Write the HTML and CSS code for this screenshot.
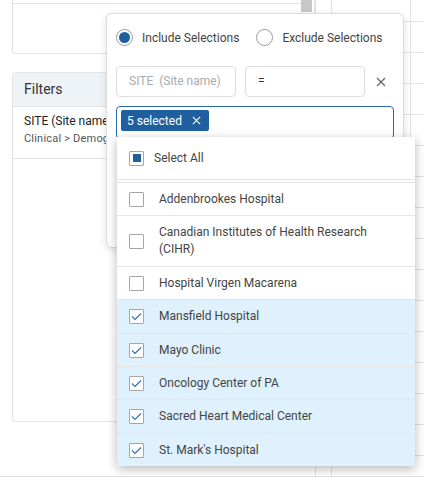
FILE: index.html
```html
<!DOCTYPE html>
<html lang="en">
<head>
  <meta charset="UTF-8" />
  <title>Filters</title>
  <link rel="stylesheet" href="styles.css">
</head>
<body>
  <div class="page">
    <div class="left">
      <div class="card-top">
        <div class="card-top-bar">
          <div class="card-top-line"></div>
          <div class="thumb"></div>
        </div>
      </div>
      <div class="filters">
        <div class="filters-head">Filters</div>
        <div class="filter-row">
          <div class="filter-name">SITE (Site name)</div>
          <div class="filter-path">Clinical &gt; Demographics</div>
        </div>
      </div>
    </div>
    <div class="strip"></div>
    <div class="table">
      <div class="trow first"><div></div><div class="tcell"></div></div>
      <div class="trow"><div></div><div class="tcell"></div></div>
      <div class="trow"><div></div><div class="tcell"></div></div>
      <div class="trow"><div></div><div class="tcell"></div></div>
      <div class="trow"><div></div><div class="tcell"></div></div>
      <div class="trow"><div></div><div class="tcell"></div></div>
      <div class="trow"><div></div><div class="tcell"></div></div>
      <div class="trow"><div></div><div class="tcell"></div></div>
      <div class="trow"><div></div><div class="tcell"></div></div>
      <div class="trow"><div></div><div class="tcell"></div></div>
      <div class="trow"><div></div><div class="tcell"></div></div>
      <div class="trow"><div></div><div class="tcell"></div></div>
      <div class="trow"><div></div><div class="tcell"></div></div>
      <div class="trow"><div></div><div class="tcell"></div></div>
      <div class="trow"><div></div><div class="tcell"></div></div>
    </div>
  </div>

  <div class="popup">
    <div class="radios">
      <label class="radio"><span class="radio-dot on"></span>Include Selections</label>
      <label class="radio"><span class="radio-dot"></span>Exclude Selections</label>
    </div>
    <div class="fields">
      <div class="field muted">SITE&nbsp; (Site name)</div>
      <div class="field">=</div>
      <span class="close">
        <svg width="10" height="10" viewBox="0 0 10 10"><path d="M1 1L9 9M9 1L1 9" stroke="#666" stroke-width="1.2" fill="none"/></svg>
      </span>
    </div>
    <div class="multi">
      <span class="chip">5 selected
        <svg width="9" height="9" viewBox="0 0 10 10"><path d="M1 1L9 9M9 1L1 9" stroke="#fff" stroke-width="1.3" fill="none"/></svg>
      </span>
    </div>
  </div>

  <div class="dropdown">
    <div class="select-all"><span class="box partial"></span>Select All</div>
    <div class="options">
      <div class="option"><span class="box"></span><span>Addenbrookes Hospital</span></div>
      <div class="option"><span class="box"></span><span>Canadian Institutes of Health Research (CIHR)</span></div>
      <div class="option"><span class="box"></span><span>Hospital Virgen Macarena</span></div>
      <div class="option sel"><span class="box checked"><svg width="11" height="9" viewBox="0 0 11 9"><path d="M1 4.5L4 7.5L10 1.5" stroke="#2b6fb3" stroke-width="1.1" fill="none"/></svg></span><span>Mansfield Hospital</span></div>
      <div class="option sel"><span class="box checked"><svg width="11" height="9" viewBox="0 0 11 9"><path d="M1 4.5L4 7.5L10 1.5" stroke="#2b6fb3" stroke-width="1.1" fill="none"/></svg></span><span>Mayo Clinic</span></div>
      <div class="option sel"><span class="box checked"><svg width="11" height="9" viewBox="0 0 11 9"><path d="M1 4.5L4 7.5L10 1.5" stroke="#2b6fb3" stroke-width="1.1" fill="none"/></svg></span><span>Oncology Center of PA</span></div>
      <div class="option sel"><span class="box checked"><svg width="11" height="9" viewBox="0 0 11 9"><path d="M1 4.5L4 7.5L10 1.5" stroke="#2b6fb3" stroke-width="1.1" fill="none"/></svg></span><span>Sacred Heart Medical Center</span></div>
      <div class="option sel last"><span class="box checked"><svg width="11" height="9" viewBox="0 0 11 9"><path d="M1 4.5L4 7.5L10 1.5" stroke="#2b6fb3" stroke-width="1.1" fill="none"/></svg></span><span>St. Mark's Hospital</span></div>
    </div>
  </div>
</body>
</html>
```

FILE: styles.css
```css
body {
  margin: 0;
  background: #fff;
  font-family: Roboto, "Liberation Sans", sans-serif;
  color: #444;
  font-size: 12px;
}
.page {
  display: flex;
  height: 476px;
  border-bottom: 1px solid #e2e2e2;
  overflow: hidden;
}
.left {
  flex: 0 0 303px;
  padding-left: 12px;
}
.card-top {
  height: 53px;
  border: 1px solid #e3e3e3;
  border-top: none;
  border-radius: 0 0 4px 4px;
}
.card-top-bar {
  display: flex;
  align-items: flex-start;
}
.card-top-line {
  width: 288px;
  height: 3px;
  border-bottom: 1px solid #e3e3e3;
}
.thumb {
  width: 11px;
  height: 12px;
  background: #c8c8c8;
}
.filters {
  margin-top: 18px;
  height: 348px;
  border: 1px solid #e3e3e3;
  border-radius: 4px;
}
.filters-head {
  height: 33px;
  line-height: 33px;
  padding-left: 11px;
  background: #eef3f7;
  border-bottom: 1px solid #e3e3e3;
  font-size: 14px;
  color: #333;
  border-radius: 4px 4px 0 0;
}
.filter-row {
  padding: 5px 11px 0;
  height: 46px;
  border-bottom: 1px solid #e3e3e3;
}
.filter-name {
  color: #222;
  font-size: 12px;
  line-height: 18px;
  white-space: nowrap;
}
.filter-path {
  color: #555;
  font-size: 11px;
  line-height: 18px;
  white-space: nowrap;
  letter-spacing: 0.2px;
}
.strip {
  flex: 0 0 15px;
  border-left: 1px solid #e3e3e3;
  border-right: 1px solid #e3e3e3;
}
.table {
  flex: 1;
}
.trow {
  display: grid;
  grid-template-columns: 78px 1fr;
  height: 30px;
  border-bottom: 1px solid #e3e3e3;
}
.trow.first {
  height: 21px;
}
.tcell {
  border-left: 1px solid #e3e3e3;
}

.popup {
  position: absolute;
  left: 106px;
  top: 13px;
  width: 278px;
  height: 233px;
  padding: 0 9px;
  background: #fff;
  border: 1px solid #ddd;
  border-radius: 6px;
  box-shadow: 0 2px 8px rgba(0, 0, 0, 0.12);
}
.radios {
  display: flex;
  gap: 17px;
  padding-top: 15px;
  height: 17px;
  align-items: center;
  white-space: nowrap;
}
.radio {
  display: flex;
  align-items: center;
  gap: 9px;
  color: #444;
}
.radio-dot {
  width: 15px;
  height: 15px;
  border: 1px solid #999;
  border-radius: 50%;
  display: flex;
  align-items: center;
  justify-content: center;
}
.radio-dot.on::after {
  content: "";
  width: 11px;
  height: 11px;
  border-radius: 50%;
  background: #1f5f9f;
}
.fields {
  display: flex;
  align-items: center;
  gap: 9px;
  margin-top: 20px;
}
.field {
  width: 106px;
  height: 29px;
  line-height: 29px;
  padding-left: 12px;
  border: 1px solid #ddd;
  border-radius: 4px;
  color: #333;
}
.field.muted {
  color: #aaa;
  white-space: nowrap;
}
.close {
  margin-left: 2px;
  display: flex;
}
.multi {
  margin-top: 9px;
  width: 272px;
  height: 28px;
  padding: 3px 0 0 4px;
  border: 1px solid #2c6aa6;
  border-radius: 4px;
  box-sizing: content-box;
}
.chip {
  display: inline-flex;
  align-items: center;
  gap: 10px;
  height: 21px;
  padding: 0 8px 0 6px;
  background: #1f5f9f;
  color: #fff;
  border-radius: 2px;
  font-size: 12px;
}

.dropdown {
  position: absolute;
  left: 117px;
  top: 137px;
  width: 298px;
  background: #fff;
  box-shadow: 0 3px 10px rgba(0, 0, 0, 0.28);
}
.select-all {
  display: flex;
  align-items: center;
  gap: 10px;
  height: 42px;
  padding-left: 12px;
  border-bottom: 1px solid #e3e3e3;
}
.options {
  margin-top: 2px;
  border-top: 1px solid #e3e3e3;
}
.option {
  display: flex;
  align-items: center;
  gap: 15px;
  padding: 8px 12px 7.4px;
  line-height: 17px;
  border-bottom: 1px solid #e6e6e6;
}
.option.last {
  border-bottom: none;
}
.option.sel {
  background: #dff1fc;
}
.box {
  flex: 0 0 auto;
  width: 13px;
  height: 13px;
  border: 1px solid #a6a6a6;
  border-radius: 1px;
  background: #fff;
  display: flex;
  align-items: center;
  justify-content: center;
}
.box.partial::after {
  content: "";
  width: 8px;
  height: 8px;
  background: #1f5f9f;
}
```
